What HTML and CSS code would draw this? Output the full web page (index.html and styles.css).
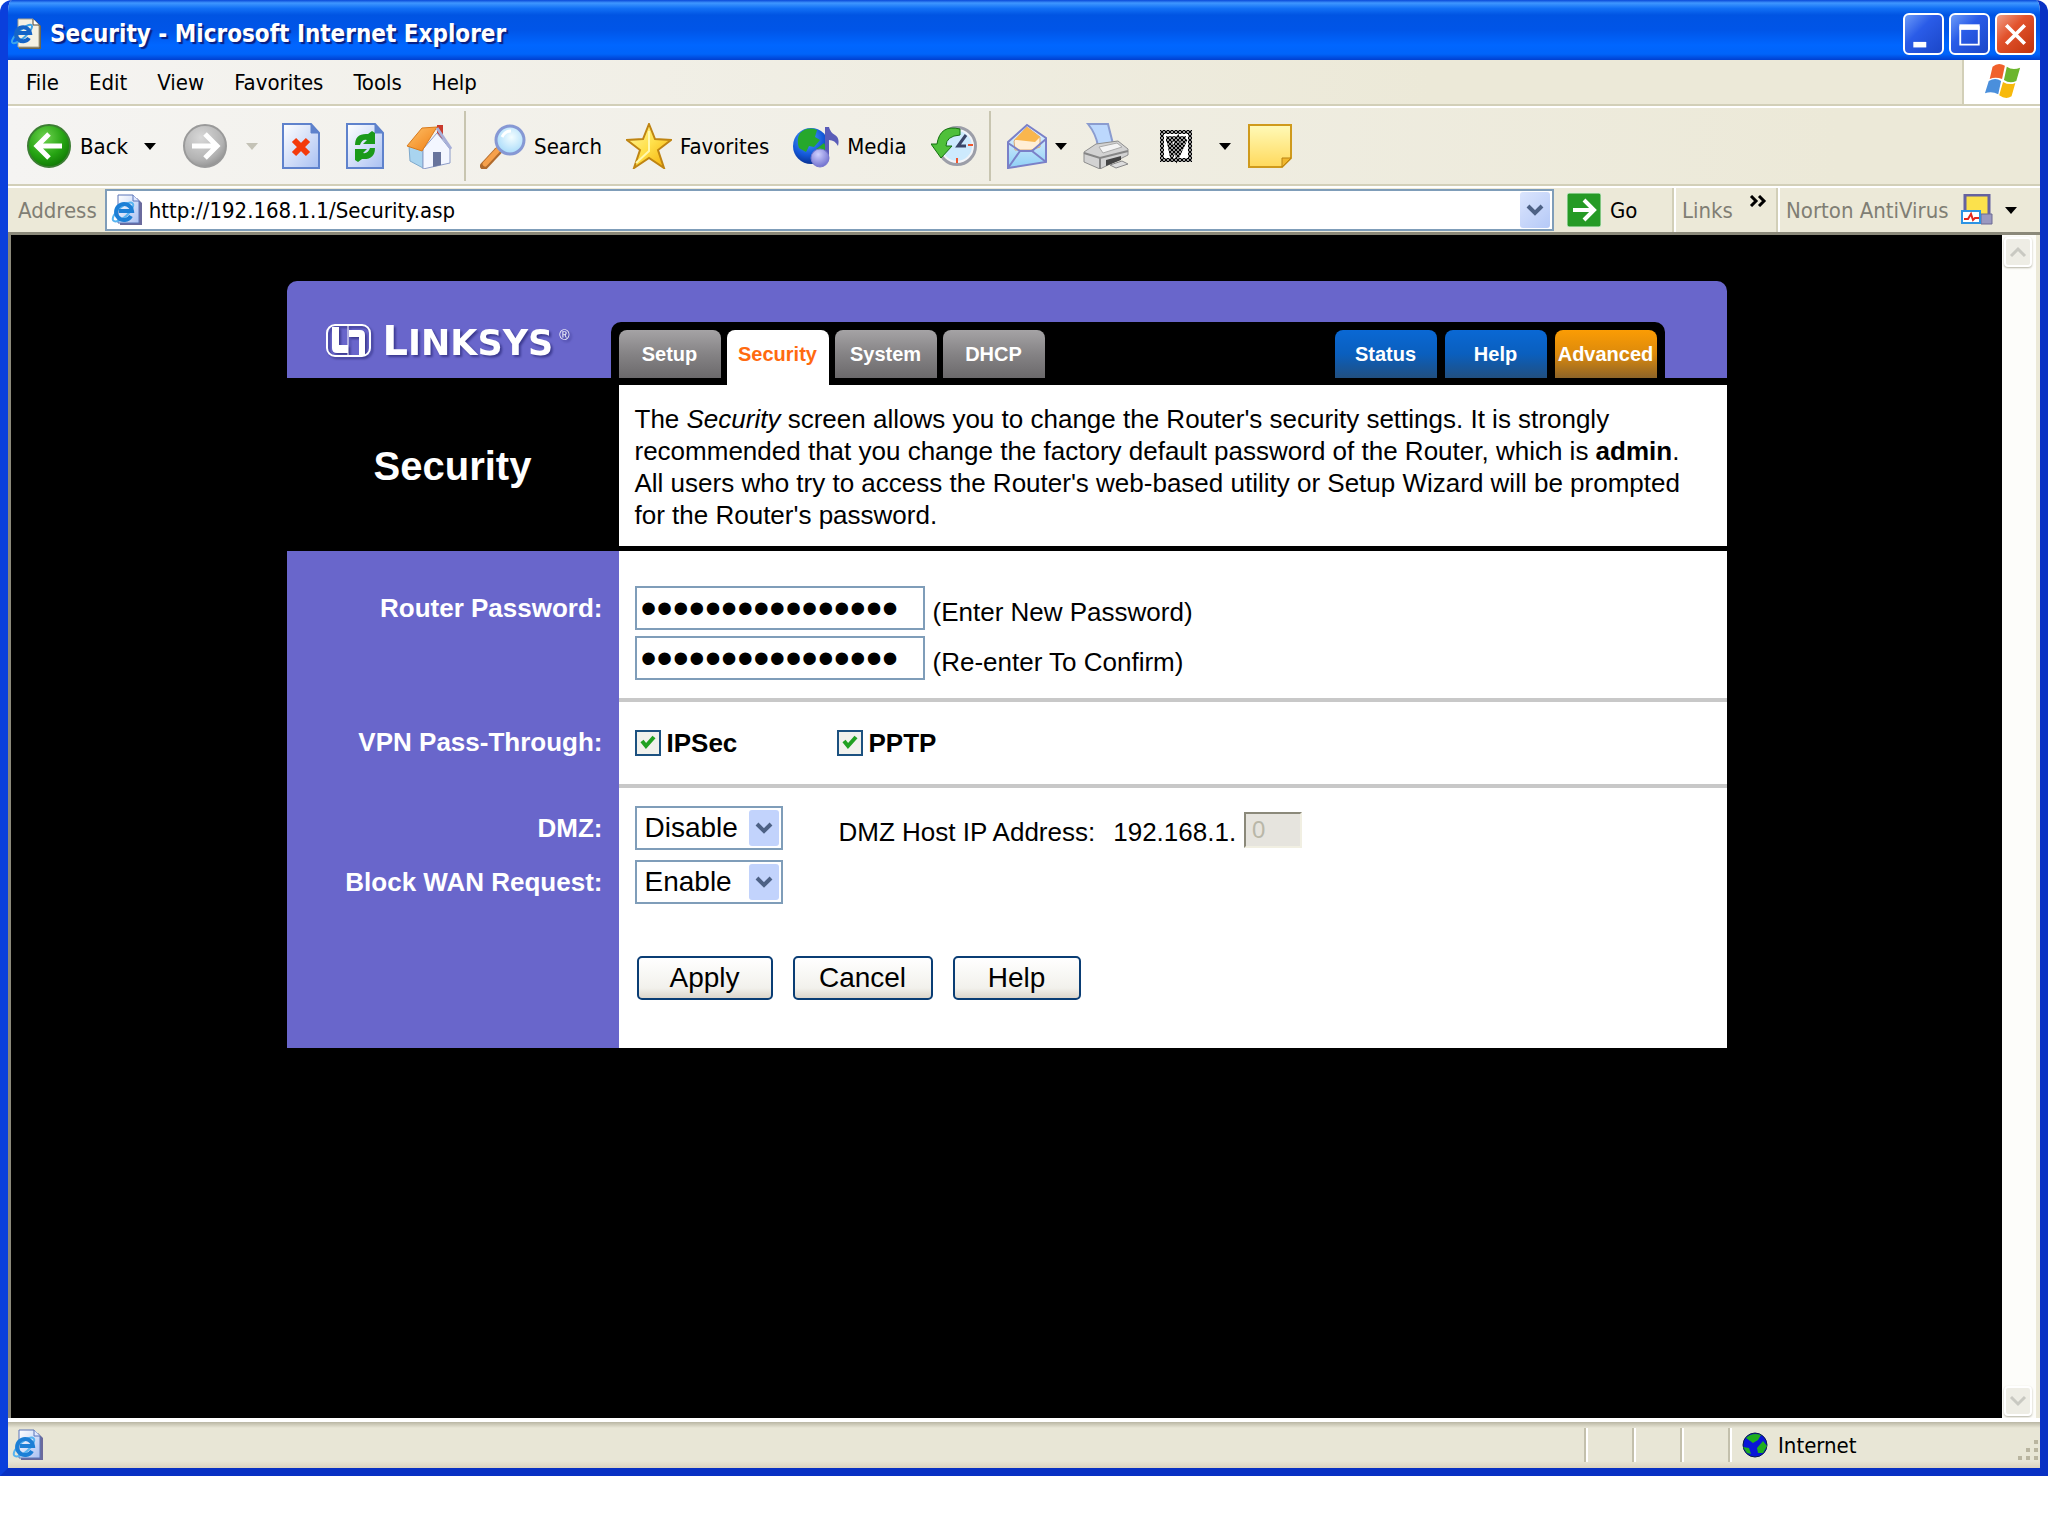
FILE: index.html
```html
<!DOCTYPE html>
<html lang="en">
<head>
    <meta charset="UTF-8">
    <meta name="viewport" content="width=device-width, initial-scale=1.0">
    <title>Security - Microsoft Internet Explorer</title>
    <link rel="stylesheet" href="styles.css">
</head>
<body>
    <svg class="defs" width="0" height="0" aria-hidden="true">
        <defs>
            <linearGradient id="gPage" x1="0" y1="0" x2="1" y2="1"><stop offset="0" stop-color="#fff"/><stop offset="1" stop-color="#a9c0f2"/></linearGradient>
            <radialGradient id="gGreen" cx=".4" cy=".3" r=".75"><stop offset="0" stop-color="#6fd34f"/><stop offset=".6" stop-color="#25a312"/><stop offset="1" stop-color="#0f7404"/></radialGradient>
            <radialGradient id="gGrey" cx=".4" cy=".3" r=".75"><stop offset="0" stop-color="#d8d8d8"/><stop offset=".7" stop-color="#b3b3b3"/><stop offset="1" stop-color="#8e8e8e"/></radialGradient>
            <radialGradient id="gLens" cx=".55" cy=".4" r=".6"><stop offset="0" stop-color="#f3fdff"/><stop offset="1" stop-color="#a8dbfa"/></radialGradient>
            <radialGradient id="gGlobe" cx=".4" cy=".3" r=".75"><stop offset="0" stop-color="#4fa3ff"/><stop offset=".6" stop-color="#1458d8"/><stop offset="1" stop-color="#062a86"/></radialGradient>
            <radialGradient id="gNoteHead" cx=".4" cy=".3" r=".75"><stop offset="0" stop-color="#cfd0ff"/><stop offset="1" stop-color="#6c6ccc"/></radialGradient>
            <linearGradient id="gStar" x1="0" y1="0" x2="1" y2="1"><stop offset="0" stop-color="#fff9a8"/><stop offset=".5" stop-color="#ffe04a"/><stop offset="1" stop-color="#f4a900"/></linearGradient>
            <linearGradient id="gRoof" x1="0" y1="0" x2="1" y2="1"><stop offset="0" stop-color="#ffc26a"/><stop offset="1" stop-color="#ef7d12"/></linearGradient>
            <linearGradient id="gNote" x1="0" y1="0" x2="0" y2="1"><stop offset="0" stop-color="#fffab8"/><stop offset="1" stop-color="#ffd95c"/></linearGradient>
            <linearGradient id="gMail" x1="0" y1="0" x2="0" y2="1"><stop offset="0" stop-color="#eef6ff"/><stop offset="1" stop-color="#8fd0f6"/></linearGradient>
            <pattern id="pDots" width="4" height="4" patternUnits="userSpaceOnUse"><path d="M0 0h4v4H0z" fill="#999"/><path d="M0 0h2v2H0zM2 2h2v2H2z" fill="#000"/></pattern>
            <symbol id="pageIcon" viewBox="0 0 32 32">
                <path d="M9 4h17l5 5v22H9z" fill="#6a6a9c"/>
                <path d="M7 1h15l6 6v22H7z" fill="url(#gPage)" stroke="#5b74b8"/>
                <path d="M22 1v6h6" fill="#dfe8ff" stroke="#5b74b8"/>
                <ellipse cx="12" cy="18" rx="13" ry="5" transform="rotate(-42 12 18)" fill="none" stroke="#58b4f0" stroke-width="2"/>
                <path d="M20 22a8 8 0 1 1 1-5H8" fill="none" stroke="#1c7fd6" stroke-width="4"/>
            </symbol>
        </defs>
    </svg>

    <div class="window">
        <header class="title-bar">
            <svg class="icon-small" viewBox="0 0 32 32">
                <path d="M9 2h16l6 6v23H9z" fill="#6c6650"/>
                <path d="M8 1h15l6 6v22H8z" fill="#f4f1e4" stroke="#a8a28c"/>
                <path d="M23 1v6h6" fill="#fff" stroke="#4b4739"/>
                <ellipse cx="12" cy="16" rx="13" ry="4" transform="rotate(-42 12 16)" fill="none" stroke="#3da4e8" stroke-width="2"/>
                <path d="M19 20a7 7 0 1 1 1-5H8" fill="none" stroke="#1565c8" stroke-width="4"/>
            </svg>
            <h1 class="window-title">Security - Microsoft Internet Explorer</h1>
            <div class="window-buttons">
                <button class="window-button" aria-label="Minimize"><svg viewBox="0 0 40 40"><path d="M9 28h14v6H9z" fill="#fff"/></svg></button>
                <button class="window-button" aria-label="Maximize"><svg viewBox="0 0 40 40"><path d="M10 12h20v19H10z" fill="none" stroke="#fff" stroke-width="2"/><path d="M9 9h22v6H9z" fill="#fff"/></svg></button>
                <button class="window-button close" aria-label="Close"><svg viewBox="0 0 40 40"><path d="M10 10l20 20M30 10L10 30" stroke="#fff" stroke-width="4"/></svg></button>
            </div>
        </header>

        <div class="menu-bar">
            <nav class="menus">
                <a href="#">File</a>
                <a href="#">Edit</a>
                <a href="#">View</a>
                <a href="#">Favorites</a>
                <a href="#">Tools</a>
                <a href="#">Help</a>
            </nav>
            <div class="throbber">
                <svg viewBox="0 0 40 38">
                    <path d="M9 4q6-5 13-1l-3 14q-7-3-13 0z" fill="#f0602b"/>
                    <path d="M24 4q6 4 14 1l-4 14q-7 3-13-1z" fill="#6cb52d"/>
                    <path d="M5 19q7-4 13 0l-3 14q-7-4-14-1z" fill="#4a8fdc"/>
                    <path d="M20 20q7 4 13 1l-4 14q-6 4-13-1z" fill="#f7b90c"/>
                </svg>
            </div>
        </div>

        <div class="toolbar">
            <button class="tool back">
                <svg class="icon" viewBox="0 0 46 46"><circle cx="23" cy="23" r="21" fill="url(#gGreen)" stroke="#3c7d33" stroke-width="2"/><path d="M36 23H12M23 11L11 23l12 12" fill="none" stroke="#fff" stroke-width="5"/></svg>
                Back
                <svg class="caret" viewBox="0 0 12 8"><path d="M0 1h12L6 8z"/></svg>
            </button>
            <button class="tool forward" aria-label="Forward" disabled>
                <svg class="icon" viewBox="0 0 46 46"><circle cx="23" cy="23" r="21" fill="url(#gGrey)" stroke="#9a9a9a" stroke-width="2"/><path d="M10 23h24M23 11l12 12-12 12" fill="none" stroke="#fff" stroke-width="5"/></svg>
                <svg class="caret" viewBox="0 0 12 8"><path d="M0 1h12L6 8z" fill="#c4c2b6"/></svg>
            </button>
            <button class="tool page-tool" aria-label="Stop">
                <svg class="icon" viewBox="0 0 46 46"><path d="M5 1h28l8 9v35H5z" fill="url(#gPage)" stroke="#5f82cc" stroke-width="2"/><path d="M33 1v9h8" fill="#5f82cc" stroke="#5f82cc"/><path d="M16 17l14 14M30 17L16 31" stroke="#f43a0b" stroke-width="6"/></svg>
            </button>
            <button class="tool page-tool" aria-label="Refresh">
                <svg class="icon" viewBox="0 0 46 46"><path d="M5 1h28l8 9v35H5z" fill="url(#gPage)" stroke="#5f82cc" stroke-width="2"/><path d="M33 1v9h8" fill="#5f82cc" stroke="#5f82cc"/><path d="M13 22q0-12 13-11l4-3 3 2v11H21l4-4q-5-1-7 5z" fill="#1a9a1a"/><path d="M33 25q0 12-13 11l-4 3-3-2V26h12l-4 4q5 1 7-5z" fill="#1a9a1a"/></svg>
            </button>
            <button class="tool" aria-label="Home">
                <svg class="icon" viewBox="0 0 46 46"><path d="M31 2h6v14h-6z" fill="#c93a2c"/><path d="M3 23l14-4v26L4 38z" fill="#a9d4ef" stroke="#7fa9cc"/><path d="M17 26L31 10l13 16v14l-27 6z" fill="#f3f6ff" stroke="#8c9cc8"/><path d="M27 29h8v13l-8 2z" fill="#68749c"/><path d="M1 23L16 5l15-1-15 24z" fill="url(#gRoof)" stroke="#d87a1c"/><path d="M31 5l14 21" stroke="#a7afd8" stroke-width="3"/></svg>
            </button>
            <div class="divider"></div>
            <button class="tool labelled">
                <svg class="icon" viewBox="0 0 46 46"><path d="M4 43l14-15" stroke="#b06a2c" stroke-width="8" stroke-linecap="round"/><path d="M5 41l13-14" stroke="#f6a04a" stroke-width="5" stroke-linecap="round"/><circle cx="30" cy="17" r="14" fill="url(#gLens)" stroke="#8698d4" stroke-width="3"/><path d="M22 14q3-6 9-6" fill="none" stroke="#fff" stroke-width="3"/></svg>
                Search
            </button>
            <button class="tool labelled">
                <svg class="icon" viewBox="0 0 46 46"><path d="M23 1l6 15 16 1-13 10 6 18-15-10L8 45l6-18L1 17l16-1z" fill="url(#gStar)" stroke="#bf8412" stroke-width="2"/><path d="M23 8v20L10 40" fill="none" stroke="#fff8b0" stroke-width="2"/></svg>
                Favorites
            </button>
            <button class="tool labelled">
                <svg class="icon" viewBox="0 0 46 46"><circle cx="18" cy="23" r="18" fill="url(#gGlobe)"/><path d="M7 10q8-7 17-3l-2 7 5 3-6 7-5-1-3 6-7-4q-3-8 1-15zM23 26l8-6 3 6-6 9z" fill="#26a82c"/><path d="M32 4h4q1 5 6 8t3 11q-3-6-9-6v20h-4z" fill="#5a5cb8"/><circle cx="27" cy="35" r="9" fill="url(#gNoteHead)" stroke="#7a7ad0"/></svg>
                Media
            </button>
            <button class="tool history" aria-label="History">
                <svg class="icon" viewBox="0 0 46 46"><circle cx="26" cy="23" r="18" fill="#cdeafd" stroke="#9c9ea8" stroke-width="4"/><circle cx="26" cy="23" r="16" fill="none" stroke="#f2f4f8" stroke-width="2"/><path d="M26 35v5M42 22h-5" stroke="#f0562c" stroke-width="2"/><path d="M35 12l-8 11h8" fill="none" stroke="#3b4668" stroke-width="3"/><path d="M29 6Q9 1 6 21H0l10 14 11-12h-6q0-10 14-11z" fill="#4fc03a" stroke="#157010"/></svg>
            </button>
            <div class="divider"></div>
            <button class="tool mail" aria-label="Mail">
                <svg class="icon" viewBox="0 0 46 46"><path d="M3 19L22 2l19 13v24L3 45z" fill="url(#gMail)" stroke="#7a80c8" stroke-width="2"/><path d="M9 18L22 4l13 10v10L26 27H10z" fill="#ffeed6" stroke="#d9a878"/><path d="M9 17L22 4l13 10-5 5-18-2z" fill="#f9b64e"/><path d="M3 20l12 8h12L41 16M3 45l12-17M27 28l14 11" fill="none" stroke="#7a80c8" stroke-width="2"/></svg>
                <svg class="caret" viewBox="0 0 12 8"><path d="M0 1h12L6 8z"/></svg>
            </button>
            <button class="tool print" aria-label="Print">
                <svg class="icon" viewBox="0 0 46 46"><path d="M5 1h20l5 20-15 2q-2-12-10-22z" fill="#bcd8fd" stroke="#8b9ccf" stroke-width="2"/><path d="M1 29l12-8 22-3 10 8v6L17 46 1 39z" fill="#d2d2d2" stroke="#8e8e8e"/><path d="M1 30l16 5 28-7M17 35v11" fill="none" stroke="#868686" stroke-width="2"/><path d="M16 24l18-4 5 4-19 6z" fill="#f4f4f4" stroke="#aaa"/><path d="M23 37l15-4v4l-15 6z" fill="#444"/><path d="M27 42l12-4 6 3-12 4z" fill="#ddd" stroke="#888"/></svg>
            </button>
            <button class="tool word" aria-label="Edit with Word">
                <svg class="icon" viewBox="0 0 46 46"><path d="M7 7h32v32H7z" fill="url(#pDots)"/><path d="M11 11h24v24H11z" fill="#fff"/><path d="M13 16h20M16 16l3 15 5-11 1 11 7-15" fill="none" stroke="#000" stroke-width="5"/><path d="M13 16h20M16 16l3 15 5-11 1 11 7-15" fill="none" stroke="url(#pDots)" stroke-width="5"/></svg>
                <svg class="caret" viewBox="0 0 12 8"><path d="M0 1h12L6 8z"/></svg>
            </button>
            <button class="tool" aria-label="Discuss">
                <svg class="icon" viewBox="0 0 46 46"><path d="M2 2h42v33l-9 9H2z" fill="url(#gNote)" stroke="#cf9a1c" stroke-width="2"/><path d="M44 35h-9v9z" fill="#f0b72e" stroke="#b98312"/></svg>
            </button>
        </div>

        <div class="address-bar">
            <label class="muted" for="address">Address</label>
            <div class="address-field">
                <svg class="icon-small"><use href="#pageIcon"/></svg>
                <input type="text" id="address" value="http://192.168.1.1/Security.asp">
                <button class="drop-button" aria-label="Show addresses"><svg viewBox="0 0 18 12"><path d="M2 2l7 7 7-7" fill="none" stroke="#4d6185" stroke-width="4"/></svg></button>
            </div>
            <button class="go">
                <svg viewBox="0 0 36 36"><rect x="1" y="1" width="34" height="34" rx="2" fill="#259a25" stroke="#dff0dc"/><path d="M7 18h20M18 8l10 10-10 10" fill="none" stroke="#fff" stroke-width="4"/></svg>
                Go
            </button>
            <div class="band links">
                <a class="muted" href="#">Links</a>
                <svg class="chevrons" viewBox="0 0 18 12"><path d="M2 1l5 5-5 5M10 1l5 5-5 5" fill="none" stroke="#000" stroke-width="3"/></svg>
            </div>
            <div class="band norton">
                <a class="muted" href="#">Norton AntiVirus</a>
                <svg class="icon-small" viewBox="0 0 32 32"><path d="M4 1h24v22H4z" fill="#fbe14c" stroke="#6562a0" stroke-width="3"/><path d="M20 20h11v10H20z" fill="#9a98c0" stroke="#6c6a94"/><path d="M1 17h18v12H1z" fill="#fff" stroke="#2c94e4" stroke-width="2"/><path d="M3 25h4l3-5 2 6 2-2h4" fill="none" stroke="#e3271c" stroke-width="2"/></svg>
                <svg class="caret" viewBox="0 0 12 8"><path d="M0 1h12L6 8z"/></svg>
            </div>
        </div>

        <div class="viewport">
            <main class="page">
                <div class="page-header">
                    <div class="brand">
                        <svg class="brand-mark" viewBox="0 0 48 36"><rect x="2" y="2" width="43" height="31" rx="8" fill="none" stroke="#fff" stroke-width="2"/><path d="M7 4h7v18h9v8H12q-5 0-5-5zM24 7h11q5 0 5 5v21h-6V14H24z" fill="#fff"/><path d="M23 3v29" stroke="#fff"/></svg>
                        <span class="brand-name"><span class="brand-initial">L</span>INKSYS</span><span class="brand-reg">®</span>
                    </div>
                    <nav class="tabs">
                        <a class="tab" href="#">Setup</a>
                        <a class="tab active" href="#">Security</a>
                        <a class="tab" href="#">System</a>
                        <a class="tab" href="#">DHCP</a>
                        <a class="tab blue first-right" href="#">Status</a>
                        <a class="tab blue" href="#">Help</a>
                        <a class="tab orange" href="#">Advanced</a>
                    </nav>
                </div>

                <div class="row intro">
                    <h2 class="page-title">Security</h2>
                    <p class="intro-text">The <i>Security</i> screen allows you to change the Router's security settings. It is strongly recommended that you change the factory default password of the Router, which is <b>admin</b>. All users who try to access the Router's web-based utility or Setup Wizard will be prompted for the Router's password.</p>
                </div>

                <form class="settings">
                    <div class="row">
                        <label class="name password-name" for="password">Router Password:</label>
                        <div class="value passwords">
                            <div class="line">
                                <input type="password" class="password" id="password" value="0123456789abcdef">
                                <span class="hint">(Enter New Password)</span>
                            </div>
                            <div class="line">
                                <input type="password" class="password" id="confirm" value="0123456789abcdef">
                                <label class="hint" for="confirm">(Re-enter To Confirm)</label>
                            </div>
                        </div>
                    </div>
                    <div class="row">
                        <div class="name vpn-name">VPN Pass-Through:</div>
                        <div class="value vpn">
                            <label class="check"><input type="checkbox" checked>IPSec</label>
                            <label class="check"><input type="checkbox" checked>PPTP</label>
                        </div>
                    </div>
                    <div class="row">
                        <div class="names">
                            <label class="name line" for="dmz">DMZ:</label>
                            <label class="name line" for="wan">Block WAN Request:</label>
                        </div>
                        <div class="value options">
                            <div class="line">
                                <select id="dmz"><option>Disable</option><option>Enable</option></select>
                                <label class="hint host" for="host">DMZ Host IP Address:</label>
                                <span class="hint prefix">192.168.1.</span>
                                <input type="text" class="host-input" id="host" value="0" disabled>
                            </div>
                            <div class="line">
                                <select id="wan"><option>Enable</option><option>Disable</option></select>
                            </div>
                            <div class="actions">
                                <button type="button" class="button apply">Apply</button>
                                <button type="button" class="button cancel">Cancel</button>
                                <button type="button" class="button help">Help</button>
                            </div>
                        </div>
                    </div>
                </form>
            </main>
            <div class="scrollbar">
                <button class="scroll-button" aria-label="Scroll up" disabled><svg viewBox="0 0 18 12"><path d="M2 10l7-7 7 7" fill="none" stroke="#c9c9c2" stroke-width="3"/></svg></button>
                <button class="scroll-button" aria-label="Scroll down" disabled><svg viewBox="0 0 18 12"><path d="M2 2l7 7 7-7" fill="none" stroke="#c9c9c2" stroke-width="3"/></svg></button>
            </div>
        </div>

        <footer class="status-bar">
            <svg class="icon-small"><use href="#pageIcon"/></svg>
            <div class="status-cells">
                <div class="cell"></div>
                <div class="cell"></div>
                <div class="cell"></div>
                <div class="cell zone">
                    <svg viewBox="0 0 26 26"><circle cx="13" cy="13" r="12" fill="#0a14d8" stroke="#0a1a4a"/><path d="M4 6q6-6 15-3l-3 5-5 3zM15 16l6-7 4 5-4 7h-5zM1 15l6 1 2 6-4-1z" fill="#1fae1f"/></svg>
                    Internet
                    <svg class="grip" viewBox="0 0 24 24"><path d="M18 2h4v4h-4zM10 10h4v4h-4zM18 10h4v4h-4zM2 18h4v4H2zM10 18h4v4h-4zM18 18h4v4h-4z" fill="#b9b5a0"/></svg>
                </div>
            </div>
        </footer>
    </div>
</body>
</html>
```
FILE: styles.css
```css
* {
    box-sizing: border-box;
}
body {
    margin: 0;
    background: #fff;
    color: #000;
    font-family: "DejaVu Sans Condensed", "Open Sans", sans-serif;
    font-size: 22px;
}
a {
    color: inherit;
    text-decoration: none;
}
button, input, select {
    font: inherit;
    color: inherit;
}
button {
    padding: 0;
    border: 0;
    background: none;
}
svg {
    display: block;
    flex: none;
}
.defs {
    position: absolute;
}
.window {
    display: flex;
    flex-direction: column;
    min-height: calc(100vh - 60px);
    border: solid #0a3fdc;
    border-width: 0 8px 8px;
    border-radius: 12px 12px 0 0;
    border-right-color: #0831c4;
    border-bottom-color: #0831c4;
    background: #ece9d8;
    overflow: hidden;
}
.icon-small {
    width: 32px;
    height: 32px;
}

/* title bar */
.title-bar {
    display: flex;
    align-items: center;
    gap: 8px;
    height: 60px;
    margin: 0 -8px;
    padding: 8px 12px 0 10px;
    background: linear-gradient(#0a48d8 0%, #3f97ff 5%, #1270f5 14%, #0054e3 25%, #0055e8 50%, #0066ff 75%, #0064fa 90%, #003fd0 100%);
}
.window-title {
    flex: 1;
    margin: 0;
    font-size: 24px;
    color: #fff;
    text-shadow: 2px 2px 1px #0a1f80;
}
.window-buttons {
    display: flex;
    gap: 5px;
}
.window-button {
    width: 41px;
    height: 42px;
    border: 2px solid #fff;
    border-radius: 6px;
    background: linear-gradient(135deg, #6c9bf8, #2a5ce8 40%, #1b46c8);
}
.window-button.close {
    background: linear-gradient(135deg, #f0a088, #e2522c 40%, #c0330c);
}

/* menus and toolbars */
.menu-bar {
    display: flex;
    height: 46px;
    border-bottom: 2px solid #d2cfb8;
    background: linear-gradient(90deg, #f5f4f2, #ece9d8 70%);
}
.menus {
    display: flex;
    flex: 1;
    align-items: center;
    gap: 30px;
    padding-left: 18px;
    border-right: 2px solid #d2cfb8;
}
.throbber {
    width: 76px;
    padding: 2px 0 0 20px;
    background: #fff;
}
.throbber svg {
    width: 38px;
    height: 38px;
}
.toolbar {
    display: flex;
    align-items: center;
    height: 80px;
    padding-left: 18px;
    border-top: 2px solid #fff;
    border-bottom: 2px solid #d2cfb8;
    background: linear-gradient(90deg, #f5f4f2, #ece9d8 90%);
}
.tool {
    display: flex;
    align-items: center;
    gap: 8px;
    margin-right: 20px;
}
.icon {
    width: 46px;
    height: 46px;
}
.caret {
    width: 12px;
    height: 8px;
}
.back .caret {
    margin-left: 8px;
}
.back {
    margin-right: 26px;
}
.forward {
    gap: 18px;
}
.page-tool {
    margin-right: 18px;
}
.labelled {
    margin-right: 24px;
}
.divider {
    width: 2px;
    height: 70px;
    margin: 0 14px 0 -8px;
    background: #c8c5b0;
}
.mail {
    gap: 4px;
    margin-right: 16px;
}
.print {
    margin-right: 24px;
}
.word {
    gap: 20px;
    margin-right: 16px;
}
.address-bar {
    display: flex;
    align-items: center;
    height: 49px;
    padding-left: 10px;
    border-top: 2px solid #fff;
    border-bottom: 3px solid #8b897a;
    background: #ece9d8;
}
.muted {
    color: #807e74;
}
.address-field {
    display: flex;
    flex: 1;
    align-items: center;
    gap: 6px;
    height: 42px;
    margin-left: 8px;
    padding: 0 2px 0 4px;
    border: 2px solid #7f9db9;
    background: #fff;
}
.address-field input {
    flex: 1;
    min-width: 0;
    padding: 0;
    border: 0;
    outline: 0;
    background: none;
}
.drop-button {
    display: grid;
    place-items: center;
    width: 30px;
    height: 36px;
    border-radius: 3px;
    background: linear-gradient(135deg, #dbe5fd, #b5c9f7);
}
.drop-button svg {
    width: 18px;
    height: 12px;
}
.go {
    display: flex;
    align-items: center;
    gap: 8px;
    width: 108px;
    margin-left: 12px;
}
.go svg {
    width: 36px;
    height: 36px;
}
.band {
    display: flex;
    align-items: center;
    height: 44px;
    padding-left: 6px;
    border-left: 2px solid #fff;
    box-shadow: -2px 0 #d2cfb8;
}
.links {
    width: 104px;
    gap: 16px;
}
.chevrons {
    width: 18px;
    height: 12px;
    margin-bottom: 18px;
}
.norton {
    width: 262px;
    gap: 12px;
}

/* browser viewport */
.viewport {
    display: flex;
    flex: 1;
    border-left: 3px solid #8b897a;
    background: #000;
}
.scrollbar {
    display: flex;
    flex-direction: column;
    justify-content: space-between;
    width: 38px;
    padding: 2px 4px 2px 2px;
    border-right: 4px solid #ece9d8;
    background: #fdfdfa;
}
.scroll-button {
    display: grid;
    place-items: center;
    height: 30px;
    border: 2px solid #fff;
    border-radius: 4px;
    background: #eeede5;
    box-shadow: 0 1px 2px #b5b3a4;
}
.scroll-button svg {
    width: 18px;
    height: 12px;
}
.page {
    width: 92%;
    max-width: 1440px;
    margin: 46px auto;
    font-family: "Liberation Sans", Arial, sans-serif;
    font-size: 26px;
    line-height: 32px;
}
.page-header {
    display: flex;
    height: 97px;
    padding-right: 62px;
    border-radius: 10px 10px 0 0;
    background: #6966cb;
}
.brand {
    display: flex;
    align-items: center;
    width: 324px;
    padding: 22px 0 0 38px;
    color: #fff;
    filter: drop-shadow(2px 2px 1px #3c3a90);
}
.brand-mark {
    width: 48px;
    height: 36px;
    margin-right: 10px;
}
.brand-name {
    font: bold 35px "DejaVu Sans", sans-serif;
}
.brand-initial {
    font-size: 40px;
}
.brand-reg {
    margin: 0 0 12px 6px;
    font-size: 14px;
    line-height: 16px;
}
.tabs {
    display: flex;
    flex: 1;
    gap: 6px;
    margin-top: 41px;
    padding: 8px 8px 0;
    border-radius: 10px 10px 0 0;
    background: #000;
}
.tab {
    width: 102px;
    padding-top: 8px;
    border-radius: 8px 8px 0 0;
    background: linear-gradient(#a5a3a5, #858385 50%, #6b696b);
    color: #fff;
    font-size: 20px;
    font-weight: bold;
    text-align: center;
}
.tab.active {
    z-index: 1;
    margin-bottom: -7px;
    background: #fff;
    color: #ff6a10;
}
.tab.blue {
    margin-right: 2px;
    background: linear-gradient(#0a68d4, #0a5fbe 50%, #214f80);
}
.tab.first-right {
    margin-left: auto;
}
.tab.orange {
    background: linear-gradient(#fb9c04, #dc8a0c 50%, #8e6428);
}
.row {
    display: grid;
    grid-template-columns: 332px 1fr;
}
.intro {
    padding: 7px 0 5px;
}
.page-title {
    margin: 0;
    align-self: center;
    color: #fff;
    font-size: 40px;
    text-align: center;
}
.intro-text {
    margin: 0;
    padding: 18px 24px 15px 16px;
    background: #fff;
}
.settings {
    background: linear-gradient(90deg, #6966cb 332px, #fff 332px);
}
.name {
    padding-right: 16px;
    color: #fff;
    font-weight: bold;
    text-align: right;
}
.password-name {
    padding-top: 41px;
}
.vpn-name {
    padding-top: 24px;
}
.value {
    padding-left: 16px;
}
.passwords {
    display: flex;
    flex-direction: column;
    gap: 6px;
    padding-top: 35px;
    padding-bottom: 18px;
    border-bottom: 4px solid #c8c8c8;
}
.line {
    display: flex;
    align-items: center;
    justify-content: flex-start;
    min-height: 44px;
}
.password {
    width: 290px;
    height: 44px;
    margin-right: 8px;
    padding: 0 4px;
    border: 2px solid #7f9db9;
    font-size: 46px;
    line-height: 40px;
}
.hint {
    padding-top: 8px;
}
.vpn {
    display: flex;
    align-items: center;
    height: 86px;
    border-bottom: 4px solid #c8c8c8;
}
.check {
    display: flex;
    align-items: center;
    gap: 6px;
    width: 202px;
    font-weight: bold;
}
.check input {
    width: 26px;
    height: 26px;
    margin: 0;
    appearance: none;
    border: 2px solid #1c5180;
    background: #f1f1ec url("data:image/svg+xml,%3Csvg xmlns='http://www.w3.org/2000/svg' viewBox='0 0 22 22'%3E%3Cpath d='M5 9l4 5 8-9' fill='none' stroke='%2321a121' stroke-width='4'/%3E%3C/svg%3E") center / 22px no-repeat;
}
.names,
.options {
    display: flex;
    flex-direction: column;
    gap: 10px;
    padding-top: 18px;
}
.names .line {
    justify-content: flex-end;
}
select {
    width: 148px;
    height: 44px;
    padding: 0 8px;
    appearance: none;
    border: 2px solid #7f9db9;
    border-radius: 0;
    background: #fff url("data:image/svg+xml,%3Csvg xmlns='http://www.w3.org/2000/svg' viewBox='0 0 30 36'%3E%3Crect width='30' height='36' rx='3' fill='%23c2d3fc'/%3E%3Cpath d='M8 14l7 7 7-7' fill='none' stroke='%234d6185' stroke-width='4'/%3E%3C/svg%3E") right 2px center / 30px 36px no-repeat;
    font-size: 28px;
}
.host {
    margin-left: 56px;
}
.prefix {
    margin: 0 8px 0 18px;
}
.host-input {
    width: 58px;
    height: 36px;
    margin-top: 4px;
    padding: 0 6px;
    border: 2px solid;
    border-color: #8b897a #f1efe2 #f1efe2 #8b897a;
    background: #e6e4de;
    color: #b9b7a8;
    font-size: 24px;
}
.actions {
    display: flex;
    gap: 20px;
    padding: 42px 2px 48px;
}
.button {
    height: 44px;
    border: 2px solid #0a3d74;
    border-radius: 5px;
    background: linear-gradient(#fff, #f2f1ec 75%, #dcd6cc);
    font-size: 28px;
}
.apply {
    width: 136px;
}
.cancel {
    width: 140px;
}
.help {
    width: 128px;
}

/* status bar */
.status-bar {
    display: flex;
    align-items: center;
    height: 50px;
    padding-left: 4px;
    border-top: 4px solid #fff;
    background: linear-gradient(#b9b6a4, #e8e6d6 6px, #e8e6d6 85%, #dcd4c0);
}
.status-cells {
    display: flex;
    margin-left: auto;
}
.cell {
    width: 48px;
    height: 34px;
    border-left: 2px solid #c3c0ac;
    box-shadow: inset 2px 0 #fff;
}
.zone {
    display: flex;
    align-items: center;
    gap: 10px;
    width: 312px;
    padding-left: 12px;
}
.zone svg {
    width: 26px;
    height: 26px;
}
.zone .grip {
    align-self: flex-end;
    width: 24px;
    height: 24px;
    margin-left: auto;
}
```
